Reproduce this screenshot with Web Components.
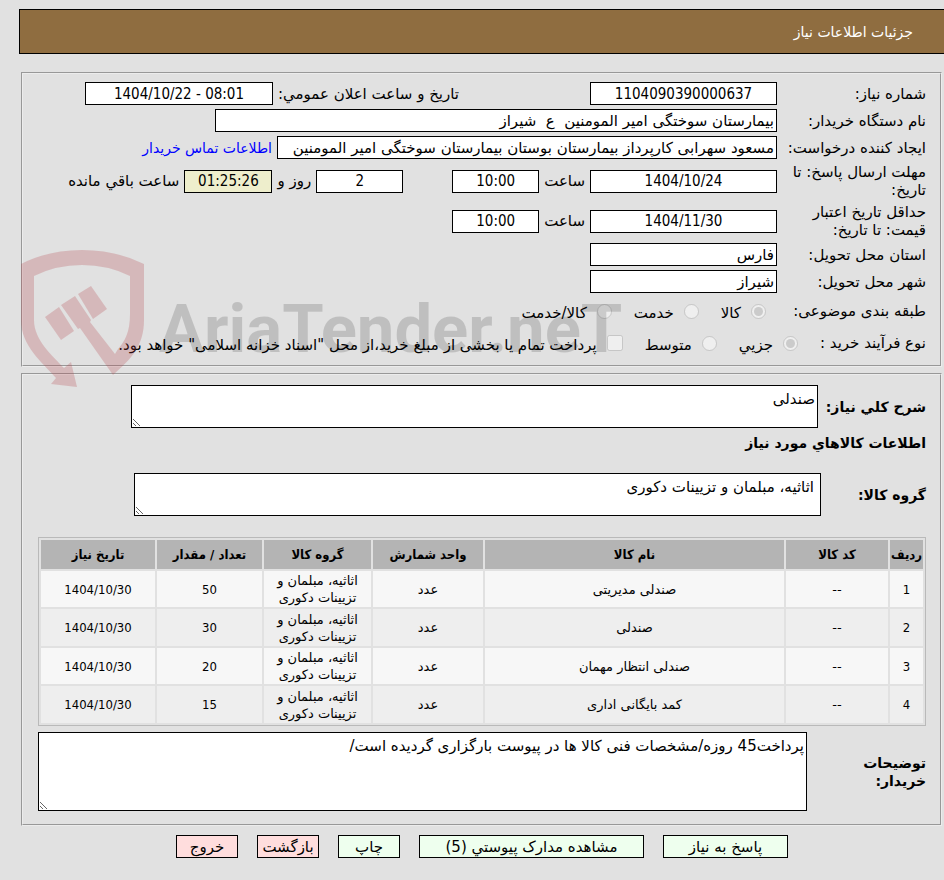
<!DOCTYPE html>
<html lang="fa" dir="rtl">
<head>
<meta charset="utf-8">
<title>جزئیات اطلاعات نیاز</title>
<style>
  body { margin: 0; background: #e1e1e1; color: #000; font: 15px/18px "DejaVu Sans", sans-serif; }
</style>
</head>
<body>
<need-page></need-page>
<script>
const define = (name, html, setup) => {
  const template = document.createElement('template');
  template.innerHTML = html;
  customElements.define(name, class extends HTMLElement {
    connectedCallback() {
      if (this.shadowRoot) return;
      const root = this.attachShadow({ mode: 'open' });
      root.append(template.content.cloneNode(true));
      if (setup) setup(this, root);
    }
  });
};

define('page-banner', `
<style>
  :host { display: block; margin: 9px 0 0 19px; border: 1px solid #000; border-right: 0; background: #8f6d40; color: #fff; padding: 13px 31px 12px; }
  h1 { margin: 0; font: inherit; font-size: 14px; }
</style>
<h1><slot></slot></h1>`);

define('info-panel', `
<style>
  :host { display: block; margin: 0 2px 0 21px; }
  fieldset { margin: 0; min-width: 0; border: 2px groove #ececec; padding: 8px 14px 8px 15px; display: flex; flex-direction: column; gap: 4px; }
  :host([roomy]) fieldset { padding-top: 10px; padding-bottom: 13px; }
</style>
<fieldset><slot></slot></fieldset>`);

define('form-row', `
<style>
  :host { display: flex; align-items: center; gap: 5px; min-height: 23px; }
  :host([tall]) { min-height: 28px; gap: 0; }
</style>
<slot></slot>`);

define('info-field', `
<style>
  :host { display: flex; align-items: center; gap: 5px; }
  :host([lead]) { gap: 0; }
  :host([lead]) label { flex: 0 0 149px; padding-left: 4px; box-sizing: border-box; }
  :host([apart]) { margin-right: 44px; }
  :host([far]) { margin-right: 126px; }
  :host([after]) { flex-direction: row-reverse; justify-content: flex-end; }
  input { box-sizing: border-box; height: 23px; margin: 0; padding: 0 2px; border: 1px solid #000; border-radius: 0; background: #fff; color: #000; font: 15px "DejaVu Sans Condensed", "DejaVu Sans", sans-serif; direction: ltr; text-align: center; min-width: 0; }
  :host([start]) input { font: inherit; direction: rtl; text-align: start; }
  :host([warn]) input { background: #eeeecc; }
</style>
<label for="f"></label><input id="f" type="text" readonly>`, (host, root) => {
  const input = root.querySelector('input');
  root.querySelector('label').textContent = host.getAttribute('label');
  input.value = host.getAttribute('value');
  input.style.width = host.getAttribute('width') + 'px';
});

define('choice-item', `
<style>
  :host { display: flex; align-items: center; gap: 10px; margin-left: 22px; }
  input { margin: 0; width: 15px; height: 15px; flex: none; }
  input[type=checkbox] { width: 16px; height: 16px; }
  label { padding-top: 4px; }
</style>
<input id="c" type="radio" disabled><label for="c"><slot></slot></label>`, (host, root) => {
  const input = root.querySelector('input');
  input.type = host.getAttribute('type') || 'radio';
  input.checked = host.hasAttribute('checked');
});

define('row-label', `
<style>
  :host { display: block; flex: 0 0 160px; }
  :host([near]) { flex-basis: 128px; }
</style>
<slot></slot>`);

define('note-field', `
<style>
  :host { display: flex; align-items: center; }
  label { flex: 0 0 108px; font-size: 14px; font-weight: bold; }
  textarea { flex: none; box-sizing: border-box; display: block; margin: 0; padding: 4px 2px; border: 1px solid #000; border-radius: 0; background: #fff; color: #000; font: inherit; width: calc(100% - 201px); height: 43px; overflow: hidden; resize: both; }
  :host([inset]) label { flex-basis: 105px; }
  :host([inset]) textarea { padding: 4px 6px; }
  :host([large]) label { flex-basis: 119px; }
  :host([large]) textarea { height: 79px; width: calc(100% - 119px); }
  :host([large]) label span { display: block; width: 80px; }
</style>
<label for="t"><span></span></label><textarea id="t" readonly></textarea>`, (host, root) => {
  root.querySelector('span').textContent = host.getAttribute('label');
  root.querySelector('textarea').value = host.getAttribute('value');
});

define('goods-table', `
<style>
  :host { display: block; }
  table { width: 100%; table-layout: fixed; border: 1px solid #b9b9b9; border-spacing: 2px; font-size: 13px; line-height: 17px; text-align: center; }
  th { background: #b4b4b4; font: bold 13px "DejaVu Sans Condensed", "DejaVu Sans", sans-serif; height: 29px; padding: 0; box-sizing: border-box; white-space: nowrap; }
  td { background: #eee; padding: 1px 4px; height: 37px; box-sizing: border-box; }
  tbody tr:nth-child(odd) td { background: #f7f7f7; height: 36px; }
  .num { font-family: "DejaVu Sans Condensed", "DejaVu Sans", sans-serif; }
</style>
<table>
  <colgroup><col style="width:33px"><col style="width:102px"><col><col style="width:110px"><col style="width:107px"><col style="width:105px"><col style="width:114px"></colgroup>
  <thead><tr><th>ردیف</th><th>کد کالا</th><th>نام کالا</th><th>واحد شمارش</th><th>گروه کالا</th><th>تعداد / مقدار</th><th>تاریخ نیاز</th></tr></thead>
  <tbody></tbody>
</table>`, (host, root) => {
  const goods = [['صندلی مدیریتی', 50], ['صندلی', 30], ['صندلی انتظار مهمان', 20], ['کمد بایگانی اداری', 15]];
  root.querySelector('tbody').innerHTML = goods.map(([name, qty], i) =>
    `<tr><td class="num">${i + 1}</td><td>--</td><td>${name}</td><td>عدد</td><td>اثاثیه، مبلمان و تزیینات دکوری</td><td class="num">${qty}</td><td class="num">1404/10/30</td></tr>`).join('');
});

define('action-button', `
<style>
  :host { display: block; }
  button { display: block; box-sizing: border-box; height: 23px; margin: 0; padding: 0; min-width: 62px; border: 1px solid #000; border-radius: 0; background: #efe; color: #000; font: inherit; white-space: nowrap; }
  :host([danger]) button { background: #fdd; }
  :host([medium]) button { min-width: 125px; }
  :host([wide]) button { min-width: 225px; }
</style>
<button type="button"><slot></slot></button>`);

define('site-watermark', `
<style>
  :host { display: block; position: absolute; left: 20px; top: 248px; width: 640px; height: 140px; pointer-events: none; }
  svg { display: block; }
</style>
<svg width="640" height="140" viewBox="0 0 640 140" direction="ltr">
  <g fill="rgb(181,65,73)" fill-opacity=".25">
    <path d="M1 16 Q28 2 62 2 Q96 2 124 16 V72 C124 98 111 111 93 127 L60 80 L58 81 L41 57 L55 48 L71 72 L70 74 L95 106 L98 101 C105 93 110 84 110 66 V28 Q88 17 62 17 Q36 17 14 28 V72 C14 93 34 109 44 120 L51 114 L57 139 L31 136 L36 130 C22 114 1 98 1 72 Z"/>
    <path d="M25 69 L39 59 L54 83 L41 92 Z"/>
    <path d="M58 46 L71 38 L87 61 L73 71 Z"/>
  </g>
  <text x="139" y="104" direction="ltr" fill="#000" fill-opacity=".15" font-family="Roboto, sans-serif" font-weight="bold" font-size="67">AriaTender.neT</text>
</svg>`);

define('need-page', `
<style>
  :host { display: flow-root; position: relative; }
  main { margin-top: 18px; display: grid; gap: 6px; grid-template-columns: minmax(0, 1fr); }
  a { color: #00f; text-decoration: none; font-size: 14px; }
  h2 { margin: 1px 0 16px; font-size: 14px; line-height: 20px; }
  nav { display: flex; justify-content: center; gap: 19px; margin: 9px 0 22px; padding-left: 20px; }
  goods-table { margin: 17px 0 2px; }
</style>
<page-banner>جزئیات اطلاعات نیاز</page-banner>
<main>
  <info-panel>
    <form-row><info-field lead label="شماره نیاز:" value="1104090390000637" width="187"></info-field><info-field far label="تاریخ و ساعت اعلان عمومي:" value="1404/10/22 - 08:01" width="188"></info-field></form-row>
    <form-row><info-field lead start label="نام دستگاه خریدار:" value="بیمارستان سوختگی امیر المومنین  ع  شیراز" width="562"></info-field></form-row>
    <form-row><info-field lead start label="ایجاد کننده درخواست:" value="مسعود سهرابی کارپرداز بیمارستان بوستان بیمارستان سوختگی امیر المومنین" width="500"></info-field><a href="#contact">اطلاعات تماس خریدار</a></form-row>
    <form-row><info-field lead label="مهلت ارسال پاسخ: تا تاریخ:" value="1404/10/24" width="187"></info-field><info-field label="ساعت" value="10:00" width="87"></info-field><info-field apart after label="روز و" value="2" width="87"></info-field><info-field after warn label="ساعت باقي مانده" value="01:25:26" width="88"></info-field></form-row>
    <form-row><info-field lead label="حداقل تاریخ اعتبار قیمت: تا تاریخ:" value="1404/11/30" width="187"></info-field><info-field label="ساعت" value="10:00" width="87"></info-field></form-row>
    <form-row><info-field lead start label="استان محل تحویل:" value="فارس" width="187"></info-field></form-row>
    <form-row><info-field lead start label="شهر محل تحویل:" value="شیراز" width="187"></info-field></form-row>
    <form-row tall role="radiogroup"><row-label>طبقه بندی موضوعی:</row-label><choice-item checked>کالا</choice-item><choice-item>خدمت</choice-item><choice-item>کالا/خدمت</choice-item></form-row>
    <form-row tall role="radiogroup"><row-label near>نوع فرآیند خرید :</row-label><choice-item checked>جزيي</choice-item><choice-item>متوسط</choice-item><choice-item type="checkbox">پرداخت تمام یا بخشی از مبلغ خرید،از محل "اسناد خزانه اسلامی" خواهد بود.</choice-item></form-row>
  </info-panel>
  <info-panel roomy>
    <note-field label="شرح كلي نياز:" value="صندلی"></note-field>
    <h2>اطلاعات كالاهاي مورد نياز</h2>
    <note-field inset label="گروه كالا:" value="اثاثیه، مبلمان و تزیینات دکوری"></note-field>
    <goods-table></goods-table>
    <note-field large label="توضیحات خریدار:" value="پرداخت45 روزه/مشخصات فنی کالا ها در پیوست بارگزاری گردیده است/"></note-field>
  </info-panel>
</main>
<nav>
  <action-button medium>پاسخ به نیاز</action-button>
  <action-button wide>مشاهده مدارک پيوستي (5)</action-button>
  <action-button>چاپ</action-button>
  <action-button danger>بازگشت</action-button>
  <action-button danger>خروج</action-button>
</nav>
<site-watermark></site-watermark>`);
</script>
</body>
</html>
